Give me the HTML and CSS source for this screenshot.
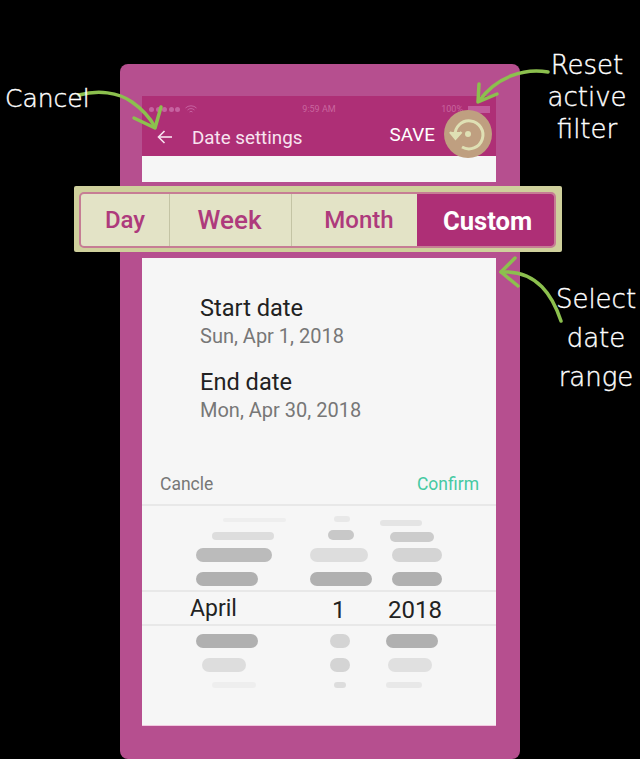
FILE: index.html
```html
<!DOCTYPE html>
<html lang="en">
<head>
    <meta charset="UTF-8">
    <meta name="viewport" content="width=device-width, initial-scale=1.0">
    <title>Date settings</title>
    <link rel="stylesheet" href="styles.css">
</head>
<body>

<div class="stage">
    <div class="phone">
        <div class="screen-top">
            <div class="status-bar">
                <div class="signal">
                    <span></span><span></span><span></span><span></span><span></span>
                    <svg class="wifi" width="12" height="9" viewBox="0 0 12 9" fill="none" stroke="#c662a0" stroke-width="1">
                        <path d="M0.5 3 A8 8 0 0 1 11.5 3"/>
                        <path d="M2.5 5 A5 5 0 0 1 9.5 5"/>
                        <path d="M4.5 7 A2.2 2.2 0 0 1 7.5 7"/>
                    </svg>
                </div>
                <div class="clock">9:59 AM</div>
                <div class="power">
                    100%
                    <span class="battery"></span>
                </div>
            </div>
            <div class="app-bar">
                <svg class="back" width="16" height="14" viewBox="0 0 16 14" fill="none" stroke="#f8e4f0" stroke-width="1.6">
                    <path d="M15 7 H2"/>
                    <path d="M7.5 1 L1.5 7 L7.5 13"/>
                </svg>
                <div class="app-title">Date settings</div>
                <div class="save">SAVE</div>
                <div class="reset">
                    <svg width="40" height="40" viewBox="0 0 40 40" fill="none" stroke="#dfe0b4" stroke-width="3">
                        <path d="M7 22 A14 14 0 1 1 14 33"/>
                        <path d="M2 18 L7.5 24.5 L13.5 18" stroke-width="2.5" fill="#dfe0b4"/>
                        <circle cx="20" cy="20" r="3" fill="#dfe0b4" stroke="none"/>
                    </svg>
                </div>
            </div>
            <div class="top-gap"></div>
        </div>

        <div class="screen-main">
            <div class="dates">
                <div class="date-name">Start date</div>
                <div class="date-value">Sun, Apr 1, 2018</div>
                <div class="date-name second">End date</div>
                <div class="date-value">Mon, Apr 30, 2018</div>
            </div>

            <div class="picker-head">
                <span class="cancle">Cancle</span>
                <span class="confirm">Confirm</span>
            </div>

            <svg class="wheel" width="354" height="84" viewBox="142 506 354 84">
                <rect x="223" y="518" width="63" height="4" rx="2" fill="#eeeeee"/>
                <rect x="334" y="516" width="16" height="6" rx="3" fill="#e8e8e8"/>
                <rect x="380" y="520" width="42" height="6" rx="3" fill="#e4e4e4"/>
                <rect x="212" y="532" width="62" height="8" rx="4" fill="#dddddd"/>
                <rect x="328" y="530" width="26" height="10" rx="5" fill="#c8c8c8"/>
                <rect x="390" y="532" width="44" height="10" rx="5" fill="#cccccc"/>
                <rect x="196" y="548" width="76" height="14" rx="7" fill="#bbbbbb"/>
                <rect x="310" y="548" width="58" height="14" rx="7" fill="#dddddd"/>
                <rect x="392" y="548" width="50" height="14" rx="7" fill="#d4d4d4"/>
                <rect x="196" y="572" width="62" height="14" rx="7" fill="#b0b0b0"/>
                <rect x="310" y="572" width="62" height="14" rx="7" fill="#b0b0b0"/>
                <rect x="392" y="572" width="50" height="14" rx="7" fill="#b0b0b0"/>
            </svg>

            <div class="wheel-selected">
                <span class="sel-month">April</span>
                <span class="sel-day">1</span>
                <span class="sel-year">2018</span>
            </div>

            <svg class="wheel" width="354" height="66" viewBox="142 626 354 66">
                <rect x="196" y="634" width="62" height="14" rx="7" fill="#b0b0b0"/>
                <rect x="330" y="634" width="20" height="14" rx="7" fill="#d4d4d4"/>
                <rect x="386" y="634" width="52" height="14" rx="7" fill="#b0b0b0"/>
                <rect x="202" y="658" width="44" height="14" rx="7" fill="#dddddd"/>
                <rect x="330" y="658" width="20" height="14" rx="7" fill="#d4d4d4"/>
                <rect x="388" y="658" width="44" height="14" rx="7" fill="#e0e0e0"/>
                <rect x="212" y="682" width="44" height="6" rx="3" fill="#eeeeee"/>
                <rect x="334" y="682" width="12" height="6" rx="3" fill="#dddddd"/>
                <rect x="386" y="682" width="36" height="6" rx="3" fill="#e8e8e8"/>
            </svg>
        </div>
    </div>

    <!-- highlighted range tabs, sits over the phone -->
    <div class="tabs-frame">
        <div class="tabs">
            <div class="tab tab-day">Day</div>
            <div class="tab tab-week">Week</div>
            <div class="tab tab-month">Month</div>
            <div class="tab tab-custom">Custom</div>
        </div>
    </div>

    <!-- hand drawn notes -->
    <svg class="arrows" width="640" height="759" viewBox="0 0 640 759" fill="none" stroke="#8cc04e" stroke-width="3.5" stroke-linecap="round" stroke-linejoin="round">
        <path d="M79 95 C98 90 118 92 132 102 C142 109 150 118 155 127"/>
        <path d="M134 118 L155 128 L161 107"/>
        <path d="M548 72 C525 68 497 76 479 101"/>
        <path d="M479 84 L478 102 L497 94"/>
        <path d="M561 321 C553 297 538 270 501 272"/>
        <path d="M515 258 L501 272 L518 286"/>
    </svg>
    <div class="note note-cancel">Cancel</div>
    <div class="note note-reset">Reset<br>active<br>filter</div>
    <div class="note note-select">Select<br>date<br>range</div>
</div>

</body>
</html>
```

FILE: styles.css
```css
html, body {
    margin: 0;
    padding: 0;
    background-color: #000;
}

body {
    font-family: Roboto, "Noto Sans", sans-serif;
    overflow: hidden;
}

.stage {
    position: relative;
    width: 640px;
    height: 759px;
    box-sizing: border-box;
    padding: 64px 0 0 120px;
}

.phone {
    width: 400px;
    height: 695px;
    box-sizing: border-box;
    padding: 32px 24px 33px 22px;
    background-color: #b64f8f;
    border-radius: 8px;
}

.screen-top {
    height: 86px;
    background-color: #f6f6f6;
}

.status-bar {
    display: flex;
    align-items: center;
    justify-content: space-between;
    height: 24px;
    padding: 2px 6px 0 7px;
    box-sizing: border-box;
    background-color: #ae2f76;
    color: #c9669f;
    font-size: 9px;
}

.signal {
    display: flex;
    align-items: center;
    gap: 1.5px;
    width: 130px;
}

.signal span {
    width: 5px;
    height: 5px;
    border-radius: 50%;
    background-color: #c662a0;
}

.wifi {
    margin-left: 3px;
}

.clock {
    width: 60px;
    text-align: center;
    margin-left: -1px;
}

.power {
    display: flex;
    align-items: center;
    justify-content: flex-end;
    gap: 5px;
    width: 130px;
}

.battery {
    width: 22px;
    height: 7px;
    background-color: #c25c9c;
}

.app-bar {
    display: flex;
    align-items: center;
    height: 36px;
    background-color: #ae2f76;
    color: #f8e4f0;
    font-size: 18.8px;
}

.back {
    margin-left: 15px;
    margin-top: -2px;
}

.app-title {
    margin-left: 19px;
    margin-top: -1px;
    flex: 1;
}

.save {
    color: #fff;
    margin-top: -7px;
    font-size: 18.9px;
}

.reset {
    display: flex;
    align-items: center;
    justify-content: center;
    width: 48px;
    height: 48px;
    margin: -8px 4px 0 9px;
    border-radius: 50%;
    background-color: #bf9f80;
}

.top-gap {
    height: 26px;
}

.screen-main {
    height: 468px;
    margin-top: 76px;
    background-color: #f6f6f6;
    border-bottom: 1px solid #f2c8e0;
    box-sizing: border-box;
}

.dates {
    height: 206px;
    padding: 35px 0 0 58px;
    box-sizing: border-box;
}

.date-name {
    color: #222;
    font-size: 23.6px;
    line-height: 30px;
}

.date-name.second {
    margin-top: 18px;
}

.date-value {
    color: #777;
    font-size: 20px;
    line-height: 26px;
}

.picker-head {
    display: flex;
    justify-content: space-between;
    align-items: center;
    height: 40px;
    padding: 0 17px 0 18px;
    border-bottom: 2px solid #e8e8e8;
    font-size: 17.5px;
}

.cancle {
    color: #777;
}

.confirm {
    color: #45c9a2;
}

.wheel {
    display: block;
}

.wheel-selected {
    height: 32px;
    border-top: 2px solid #e8e8e8;
    border-bottom: 2px solid #e8e8e8;
    color: #222;
    display: grid;
    grid-template-columns: 175px 71px 1fr;
    align-items: center;
}

.sel-month {
    font-size: 23px;
    padding-left: 48px;
}

.sel-day {
    font-size: 24px;
    padding-left: 15px;
    margin-top: 3px;
}

.sel-year {
    font-size: 24px;
    margin-top: 3px;
}

.tabs-frame {
    position: absolute;
    left: 74px;
    top: 186px;
    width: 488px;
    height: 66px;
    box-sizing: border-box;
    padding: 6px 6px 4px 5px;
    background-color: #cfd09c;
    border-radius: 2px;
}

.tabs {
    display: flex;
    height: 100%;
    box-sizing: border-box;
    border: 2px solid #c67d94;
    border-radius: 5px;
    background-color: #e3e3c6;
    color: #ae3a7c;
    font-weight: 500;
    overflow: hidden;
}

.tab {
    display: flex;
    align-items: center;
    justify-content: center;
    font-size: 24px;
    border-right: 1px solid #c4c4a4;
}

.tab-day {
    width: 88px;
}

.tab-week {
    width: 122px;
    padding-right: 2px;
    box-sizing: border-box;
    font-size: 26px;
}

.tab-month {
    width: 125px;
    border-right: none;
    padding-left: 9px;
    box-sizing: border-box;
}

.tab-custom {
    flex: 1;
    border-right: none;
    background-color: #ae2f76;
    color: #fff;
    font-size: 25.6px;
    font-weight: 700;
    padding: 2px 0 0 4px;
}

.arrows {
    position: absolute;
    left: 0;
    top: 0;
}

.note {
    position: absolute;
    color: #fff;
    font-family: "DejaVu Sans", sans-serif;
    font-weight: 200;
    font-size: 26px;
    text-align: center;
    -webkit-text-stroke: 0.4px #fff;
}

.note-cancel {
    left: 5px;
    top: 84px;
    font-size: 25px;
}

.note-reset {
    left: 542px;
    top: 49px;
    width: 90px;
    line-height: 32px;
}

.note-select {
    left: 552px;
    top: 280px;
    width: 88px;
    line-height: 39px;
}
```
